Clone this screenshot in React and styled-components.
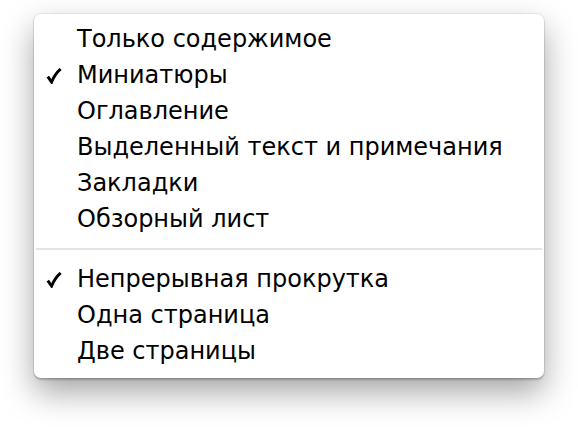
import React from "react";
import styled, { createGlobalStyle } from "styled-components";

const Global = createGlobalStyle`
  html, body { margin: 0; padding: 0; background: #ffffff; }
  body { font-family: "DejaVu Sans", "Noto Sans", sans-serif; }
`;

const Page = styled.div`
  padding: 14px 34px;
  width: 578px;
  height: 432px;
  box-sizing: border-box;
`;

const Menu = styled.div`
  width: 510px;
  box-sizing: border-box;
  background: #ffffff;
  border-radius: 7px;
  padding: 7px 0 9px;
  box-shadow: 0 0 0 1px rgba(0, 0, 0, 0.06), 0 2px 2px rgba(0, 0, 0, 0.2),
    0 14px 32px rgba(0, 0, 0, 0.36);
`;

const Item = styled.div`
  display: flex;
  align-items: center;
  height: 36px;
  padding-left: 43px;
  position: relative;
  font-size: 24px;
  color: #000;
  white-space: nowrap;
`;

const Check = styled.svg`
  position: absolute;
  left: 12px;
  top: 11px;
  width: 16px;
  height: 16px;
`;

const Separator = styled.div`
  height: 24px;
  display: flex;
  align-items: center;
  padding: 0 2px;
  &::after {
    content: "";
    flex: 1;
    height: 2px;
    background: #e4e4e4;
  }
`;

const CheckMark = () => (
  <Check viewBox="0 0 16 16">
    <path
      d="M1.8 8.6 L5.6 14 Q9 6 14.6 1"
      fill="none"
      stroke="#000"
      strokeWidth="3"
      strokeLinejoin="miter"
    />
  </Check>
);

const groups = [
  [
    { label: "Только содержимое" },
    { label: "Миниатюры", checked: true },
    { label: "Оглавление" },
    { label: "Выделенный текст и примечания" },
    { label: "Закладки" },
    { label: "Обзорный лист" },
  ],
  [
    { label: "Непрерывная прокрутка", checked: true },
    { label: "Одна страница" },
    { label: "Две страницы" },
  ],
];

export default function App() {
  return (
    <>
      <Global />
      <Page>
        <Menu>
          {groups.map((g, gi) => (
            <React.Fragment key={gi}>
              {gi > 0 && <Separator />}
              {g.map((it) => (
                <Item key={it.label}>
                  {it.checked && <CheckMark />}
                  {it.label}
                </Item>
              ))}
            </React.Fragment>
          ))}
        </Menu>
      </Page>
    </>
  );
}
